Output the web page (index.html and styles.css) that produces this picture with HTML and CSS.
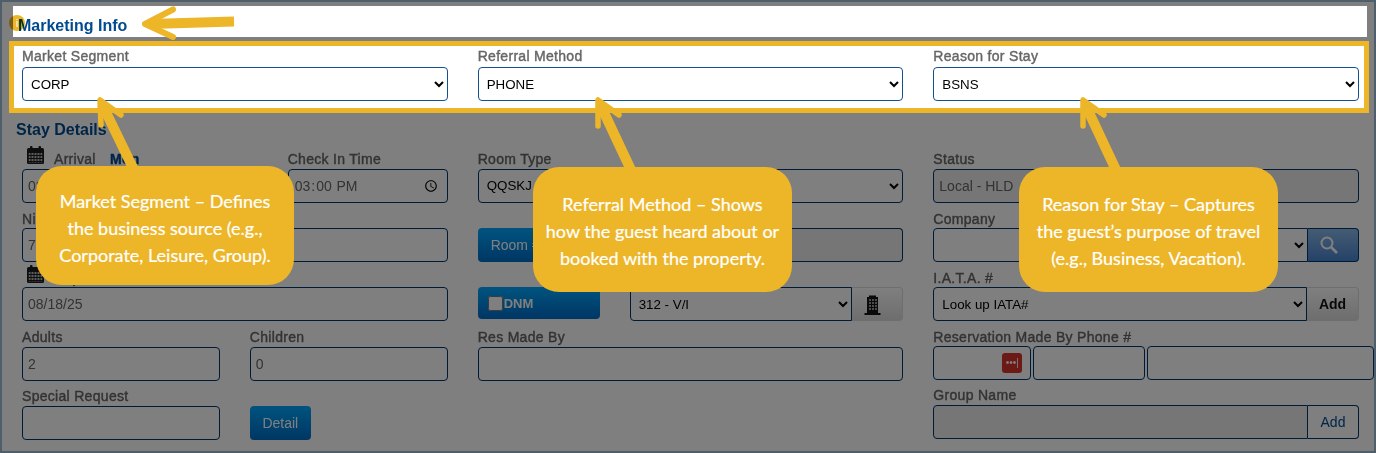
FILE: index.html
```html
<!DOCTYPE html>
<html lang="en">
<head>
  <meta charset="UTF-8" />
  <title>Marketing Info</title>
  <link rel="stylesheet" href="styles.css">
</head>
<body>
  <svg class="defs" width="0" height="0">
    <defs>
      <pattern id="cells" width="3" height="3" patternUnits="userSpaceOnUse" x="1.5" y="7">
        <rect width="2" height="2" fill="#bbb" />
      </pattern>
      <pattern id="windows" width="3" height="3" patternUnits="userSpaceOnUse" x="2" y="4">
        <rect width="2" height="2" fill="#999" />
      </pattern>
      <symbol id="calendar" viewBox="0 0 17 18">
        <rect y="2" width="17" height="16" rx="1.5" fill="#1c1c1c" />
        <rect x="3" width="2.5" height="4" rx="1" fill="#1c1c1c" />
        <rect x="11.5" width="2.5" height="4" rx="1" fill="#1c1c1c" />
        <rect x="1.5" y="7" width="14" height="9.5" fill="url(#cells)" />
      </symbol>
    </defs>
  </svg>

  <div class="page">
    <div class="shade"></div>

    <div class="band">
      <h2 class="title">Marketing Info</h2>
    </div>

    <div class="highlight">
      <div class="cols">
        <div class="field">
          <label>Market Segment</label>
          <select><option>CORP</option></select>
        </div>
        <div class="field">
          <label>Referral Method</label>
          <select><option>PHONE</option></select>
        </div>
        <div class="field">
          <label>Reason for Stay</label>
          <select><option>BSNS</option></select>
        </div>
      </div>
    </div>

    <div class="stay">
      <h2 class="title stay-title">Stay Details</h2>
      <div class="cols">
        <div class="col">
          <div class="split-arrival">
            <div class="field">
              <label class="date-label">
                <svg class="cal-icon"><use href="#calendar" /></svg>
                <span>Arrival</span>
                <b>Mon</b>
              </label>
              <input type="text" value="08/11/25" />
            </div>
            <div class="field">
              <label>Check In Time</label>
              <input type="time" value="15:00" />
            </div>
          </div>
          <div class="field">
            <label>Nights</label>
            <input type="text" value="7" />
          </div>
          <div class="field">
            <label class="date-label">
              <svg class="cal-icon"><use href="#calendar" /></svg>
              <span>Departure</span>
            </label>
            <input type="text" value="08/18/25" />
          </div>
          <div class="split">
            <div class="field">
              <label>Adults</label>
              <input type="text" value="2" />
            </div>
            <div class="field">
              <label>Children</label>
              <input type="text" value="0" />
            </div>
          </div>
          <div class="split">
            <div class="field">
              <label>Special Request</label>
              <input type="text" />
            </div>
            <div class="field no-label">
              <button class="btn-blue detail-btn">Detail</button>
            </div>
          </div>
        </div>

        <div class="col">
          <div class="field">
            <label>Room Type</label>
            <select><option>QQSKJ</option></select>
          </div>
          <div class="field no-label">
            <div class="group">
              <button class="btn-blue room-btn">Room #</button>
              <input class="locked joined-left" type="text" />
            </div>
          </div>
          <div class="split-room no-label">
            <button class="btn-blue dnm-btn"><input type="checkbox" />DNM</button>
            <div class="group">
              <select class="joined-right"><option>312 - V/I</option></select>
              <button class="btn-gray hotel-btn">
                <svg width="17" height="20" viewBox="0 0 17 20">
                  <path d="M5 2V0.5h7V2h2v16h2.5v2H.5v-2H3V2z" fill="#151515" />
                  <rect x="4" y="4" width="9" height="12" fill="url(#windows)" />
                </svg>
              </button>
            </div>
          </div>
          <div class="field">
            <label>Res Made By</label>
            <input type="text" />
          </div>
        </div>

        <div class="col">
          <div class="field">
            <label>Status</label>
            <input class="locked" type="text" value="Local - HLD" />
          </div>
          <div class="field">
            <label>Company</label>
            <div class="group">
              <select class="joined-right"><option></option></select>
              <button class="btn-search">
                <svg width="18" height="18" viewBox="0 0 18 18" fill="none" stroke="#fff" stroke-width="2">
                  <circle cx="7" cy="7" r="5.5" />
                  <path d="M11 11l6 6" stroke-width="2.6" />
                </svg>
              </button>
            </div>
          </div>
          <div class="field">
            <label>I.A.T.A. #</label>
            <div class="group">
              <select class="joined-right"><option>Look up IATA#</option></select>
              <button class="btn-gray add-btn">Add</button>
            </div>
          </div>
          <div class="field">
            <label>Reservation Made By Phone #</label>
            <div class="phone">
              <div class="phone-first">
                <input type="text" />
                <span class="pw-badge">•••|</span>
              </div>
              <input type="text" />
              <input type="text" />
            </div>
          </div>
          <div class="field">
            <label>Group Name</label>
            <div class="group">
              <input class="locked joined-right" type="text" />
              <button class="btn-plain">Add</button>
            </div>
          </div>
        </div>
      </div>
    </div>

    <span class="info-dot">i</span>

    <svg class="arrows" width="1376" height="453" fill="none" stroke="#edb629" stroke-linecap="round" stroke-linejoin="round">
      <path d="M234 21.5L150 24" stroke-width="10" stroke-linecap="butt" />
      <path d="M173 9.500L145 24l28 13" stroke-width="6" />
      <path d="M134 170L102 104" stroke-width="10" stroke-linecap="butt" />
      <path d="M121 115L100 100l1 25" stroke-width="5.500" />
      <path d="M631 170L600 104" stroke-width="10" stroke-linecap="butt" />
      <path d="M619 115L598 100v26" stroke-width="5.500" />
      <path d="M1116 170L1085 104" stroke-width="10" stroke-linecap="butt" />
      <path d="M1104 115L1083 100v26" stroke-width="5.500" />
    </svg>

    <div class="callout callout-market">Market Segment – Defines the business source (e.g., Corporate, Leisure, Group).</div>
    <div class="callout callout-referral">Referral Method – Shows how the guest heard about or booked with the property.</div>
    <div class="callout callout-reason">Reason for Stay – Captures the guest’s purpose of travel (e.g., Business, Vacation).</div>
  </div>
</body>
</html>
```

FILE: styles.css
```css
* {
  box-sizing: border-box;
  margin: 0;
  padding: 0;
  font-family: 'Liberation Sans', Arial, sans-serif;
}

body {
  background: #fff;
}

.defs {
  position: absolute;
}

.page {
  position: relative;
  height: 453px;
  overflow: hidden;
  border: 2px solid #4e5f6b;
  background: #fff;
}

/* dims everything except the highlighted parts */
.shade {
  position: absolute;
  inset: 0;
  z-index: 1;
  background: rgba(0, 0, 0, 0.5);
}

.band {
  position: relative;
  z-index: 2;
  height: 31px;
  margin: 4px 7px 0 11px;
  padding: 10px 0 0 5px;
  background: #fff;
}

.title {
  font-size: 16px;
  line-height: 20px;
  font-weight: bold;
  color: #004a8f;
}

.highlight {
  position: relative;
  z-index: 2;
  margin: 4px 5px 0 7px;
  padding: 1px 5px 7px 8px;
  border: 5px solid #edb629;
  background: #fff;
}

.highlight label {
  line-height: 18px;
}

.highlight select {
  border-color: #15508f;
}

.stay {
  padding: 7px 15px 0 20px;
}

.stay-title {
  margin: 0 0 8.1px -6px;
}

.cols {
  display: grid;
  grid-template-columns: repeat(3, 1fr);
  gap: 30px;
}

.col {
  min-width: 0;
}

label {
  display: block;
  height: 20.4px;
  font-size: 14px;
  line-height: 22px;
  letter-spacing: 0.3px;
  -webkit-text-stroke: 0.4px;
  color: #666;
  white-space: nowrap;
}

.col .field,
.split-room {
  margin-bottom: 4.85px;
}

.split .field,
.split-arrival .field {
  margin-bottom: 0;
}

.split,
.split-arrival {
  display: grid;
  grid-template-columns: 1fr 1fr;
  gap: 30px;
  margin-bottom: 4.85px;
}

.split-arrival {
  grid-template-columns: 1fr 160px;
}

.no-label {
  padding-top: 20.4px;
}

.split-room {
  display: grid;
  grid-template-columns: 122px 1fr;
  gap: 30px;
}

input[type="text"],
input[type="time"],
select {
  display: block;
  width: 100%;
  height: 34px;
  padding: 0 5px;
  border: 1px solid #00366b;
  border-radius: 4px;
  background: #fff;
  font-size: 14px;
  color: #666;
}

select {
  padding-left: 4px;
  font-size: 13.333px;
  color: #000;
}

input[type="time"] {
  padding-left: 5px;
}

.locked {
  background: #ececec !important;
}

.date-label {
  position: relative;
  padding-left: 32px;
}

.date-label b {
  margin-left: 10px;
  color: #004a8f;
}

.cal-icon {
  position: absolute;
  left: 5px;
  top: -2px;
  width: 17px;
  height: 18px;
}

.group {
  display: flex;
}

.group input,
.group select {
  flex: 1;
  min-width: 0;
}

.joined-right {
  border-top-right-radius: 0 !important;
  border-bottom-right-radius: 0 !important;
}

.joined-left {
  border-top-left-radius: 0 !important;
  border-bottom-left-radius: 0 !important;
  border-left: none !important;
}

button {
  font-size: 14px;
  cursor: pointer;
}

.btn-blue {
  border: none;
  border-radius: 4px;
  background: linear-gradient(#00a8ff, #006cc8);
  color: #fff;
}

.detail-btn {
  width: 61px;
  height: 34px;
}

.room-btn {
  flex: 0 0 90px;
  height: 34px;
  padding-left: 13px;
  border-radius: 4px 0 0 4px;
  text-align: left;
}

.dnm-btn {
  display: flex;
  align-items: center;
  height: 32px;
  padding-left: 10px;
  font-size: 13px;
  font-weight: bold;
}

.dnm-btn input {
  width: 15px;
  height: 15px;
  margin: 0 1px 0 0;
}

.btn-gray {
  flex: 0 0 51px;
  height: 34px;
  border: 1px solid #ddd;
  border-left: none;
  border-radius: 0 4px 4px 0;
  background: linear-gradient(#fff, #dcdcdc);
  color: #111;
}

.hotel-btn {
  padding-right: 9px;
}

.hotel-btn svg {
  display: block;
  margin: 1px auto 0;
}

.add-btn {
  flex-basis: 52px;
  font-weight: bold;
}

.btn-search {
  flex: 0 0 51px;
  height: 34px;
  padding-right: 8px;
  border: 1px solid #00366b;
  border-left: none;
  border-radius: 0 4px 4px 0;
  background: linear-gradient(#8ab8e8, #4a84d0);
}

.btn-search svg {
  display: block;
  margin: 0 auto;
}

.btn-plain {
  flex: 0 0 51px;
  height: 34px;
  border: 1px solid #00366b;
  border-left: none;
  border-radius: 0 4px 4px 0;
  background: #fff;
  color: #004a8f;
}

.phone {
  display: grid;
  grid-template-columns: 98px 112px 1fr;
  gap: 2px;
  margin: -1px -15px 1px 0;
}

.phone-first {
  position: relative;
}

.pw-badge {
  position: absolute;
  left: 69px;
  top: 7px;
  width: 20px;
  height: 20px;
  border-radius: 3px;
  background: #d8352b;
  color: #fff;
  font-size: 10px;
  line-height: 20px;
  text-align: center;
}

.info-dot {
  position: absolute;
  left: 7px;
  top: 13px;
  z-index: 3;
  width: 16px;
  height: 16px;
  border-radius: 50%;
  background: #edb629;
  color: #fff;
  font-size: 11px;
  line-height: 16px;
  text-align: center;
  mix-blend-mode: multiply;
}

.arrows {
  position: absolute;
  left: -2px;
  top: -2px;
  z-index: 3;
}

.callout {
  position: absolute;
  z-index: 4;
  display: flex;
  align-items: center;
  justify-content: center;
  width: 259px;
  height: 125px;
  top: 165px;
  padding: 4px 12px 0;
  border-radius: 26px;
  background: #edb629;
  color: #fff;
  font-family: Lato, sans-serif;
  font-size: 18px;
  line-height: 27px;
  -webkit-text-stroke: 0.2px;
  text-align: center;
}

.callout-market {
  left: 34px;
  top: 164px;
  width: 258px;
  height: 119px;
  padding: 6px 12px 0;
}

.callout-referral {
  left: 531px;
}

.callout-reason {
  left: 1017px;
}
```
